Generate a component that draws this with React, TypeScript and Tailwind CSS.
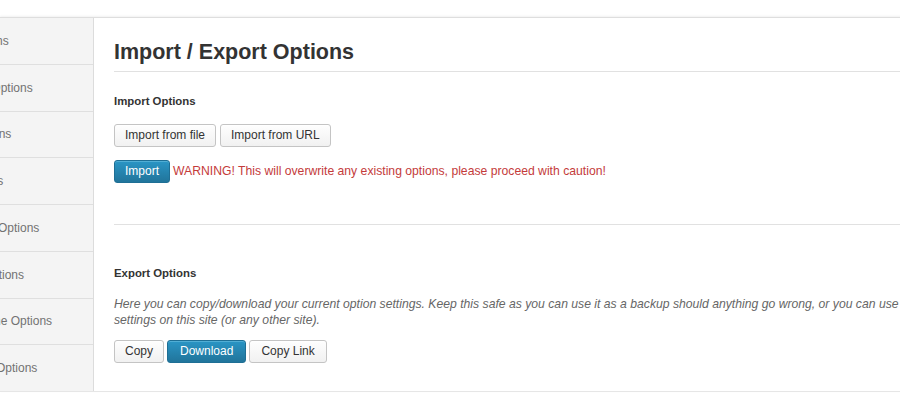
import React from "react";

const navItems = [
  "Positions",
  "Shop Options",
  "Locations",
  "Widgets",
  "Footer Options",
  "API Options",
  "Headline Options",
  "Social Options",
];

function Btn({ children, primary = false, wide = false }: { children: React.ReactNode; primary?: boolean; wide?: boolean }) {
  return primary ? (
    <button className={`h-[23px] ${wide ? "px-[12px]" : "px-[10px]"} rounded-[3px] border border-[#1f6f95] bg-gradient-to-b from-[#2a95c5] to-[#21759b] text-white text-[12px] leading-[21px] shadow-[inset_0_1px_0_rgba(120,200,230,0.5)] whitespace-nowrap`}>
      {children}
    </button>
  ) : (
    <button className={`h-[23px] ${wide ? "px-[11px]" : "px-[10px]"} rounded-[3px] border border-[#c4c4c4] bg-gradient-to-b from-[#fefefe] to-[#f1f1f1] text-[#333] text-[12px] leading-[21px] shadow-[inset_0_1px_0_#fff] whitespace-nowrap`}>
      {children}
    </button>
  );
}

export default function App() {
  return (
    <div className="w-[900px] h-[409px] bg-white overflow-hidden font-['Liberation_Sans',Arial,sans-serif]">
      <div className="h-[17px] bg-white" />
      <div className="flex w-[1100px] h-[375px] border-t border-b border-[#dedede] border-b-[#e6e6e6] shadow-[0_-1px_2px_rgba(0,0,0,0.06)]">
        <aside className="w-[94px] shrink-0 flex flex-col bg-[#f4f4f4] border-r border-[#dcdcdc] overflow-hidden">
          {navItems.map((label, i) => (
            <div
              key={label}
              className={`flex-1 flex items-center overflow-hidden ${i < navItems.length - 1 ? "border-b border-[#dfdfdf]" : ""}`}
            >
              <span className="ml-[-40px] whitespace-nowrap text-[12px] text-[#727272]">{label}</span>
            </div>
          ))}
        </aside>
        <main className="flex-1 pl-[20px] pt-[23px] bg-white">
          <h2 className="h-[22px] leading-[22px] text-[21.5px] font-bold text-[#333]">Import / Export Options</h2>
          <div className="mt-[8px] border-t border-[#e1e1e1]" />
          <h3 className="mt-[22px] h-[14px] leading-[14px] text-[11.4px] font-bold text-[#333]">Import Options</h3>
          <div className="mt-[16px] flex gap-[4px]">
            <Btn>Import from file</Btn>
            <Btn>Import from URL</Btn>
          </div>
          <div className="mt-[13px] flex items-center gap-[3px]">
            <Btn primary>Import</Btn>
            <span className="text-[12.2px] text-[#c43b3b] whitespace-nowrap">
              WARNING! This will overwrite any existing options, please proceed with caution!
            </span>
          </div>
          <div className="mt-[41px] border-t border-[#e1e1e1]" />
          <h3 className="mt-[41px] h-[14px] leading-[14px] text-[11.4px] font-bold text-[#333]">Export Options</h3>
          <p className="mt-[16px] w-[960px] text-[12.2px] leading-[16px] italic text-[#666]">
            Here you can copy/download your current option settings. Keep this safe as you can use it as a backup should anything go wrong, or you can use these options to restore your settings on this site (or any other site).
          </p>
          <div className="mt-[12px] flex gap-[3px]">
            <Btn>Copy</Btn>
            <Btn primary wide>Download</Btn>
            <Btn wide>Copy Link</Btn>
          </div>
        </main>
      </div>
    </div>
  );
}
